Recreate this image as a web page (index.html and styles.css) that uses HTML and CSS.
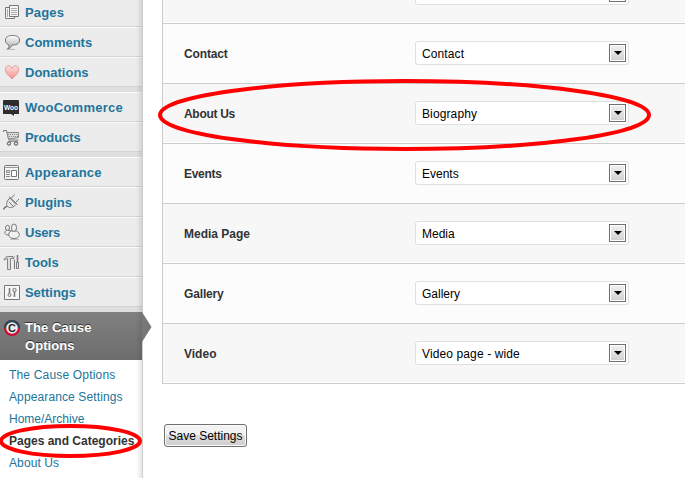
FILE: index.html
```html
<!DOCTYPE html>
<html lang="en">
<head>
<meta charset="utf-8">
<title>The Cause Options</title>
<link rel="stylesheet" href="styles.css">
</head>
<body>
<div class="page">
  <nav class="sidebar">
    <ul class="group">
      <li class="item"><svg class="icon" viewBox="0 0 18 18"><g fill="#f6f6f6" stroke="#777"><path d="M2.500 4.500h9v11h-9z"/><path d="M6.500 2.500h9v11h-9z"/></g><path d="M8 5.500h6M8 7.500h6M8 9.500h6M8 11.500h6M4.500 6v8" stroke="#aaa"/></svg><span class="w-pages">Pages</span></li>
      <li class="item"><svg class="icon" viewBox="0 0 18 18"><defs><linearGradient id="bubble" x2="0" y2="1"><stop stop-color="#fff"/><stop offset="1" stop-color="#aaa"/></linearGradient></defs><path d="M9.500 2.500C5 2.500 2.500 4 2.500 7S4 11.500 6 12c0 2-.5 3-1.500 4 2.500-.5 4-2 4.500-4 6 0 7.500-2 7.500-5s-2.500-4.500-7-4.500z" fill="url(#bubble)" stroke="#777"/><path d="M3 16.500h9" stroke="#bbb"/></svg><span>Comments</span></li>
      <li class="item"><svg class="icon" viewBox="0 0 18 18"><defs><linearGradient id="heart" x2="0" y2="1"><stop stop-color="#ffe2df"/><stop offset="1" stop-color="#f58c8c"/></linearGradient></defs><path d="M9 16C6 13 2.500 10.500 2.500 6.500c0-4.500 5-5 6.500-1 1.500-4 6.500-3.500 6.500 1C15.500 10.500 12 13 9 16z" fill="url(#heart)" stroke="#dd9a9a"/></svg><span>Donations</span></li>
    </ul>
    <ul class="group">
      <li class="item"><svg class="icon" viewBox="0 0 18 18"><path d="M1 2h14a1 1 0 0 1 1 1v13h-5v2l-3-2H0V3a1 1 0 0 1 1-1z" fill="#2d2d2d"/><text class="woo" x="1" y="12" textLength="14" lengthAdjust="spacingAndGlyphs">Woo</text></svg><span class="w-woo">WooCommerce</span></li>
      <li class="item"><svg class="icon" viewBox="0 0 18 18"><path d="M.5 4V2.500h3l2.500 9.500h9.500" fill="none" stroke="#777"/><path d="M4 4.500h11.500v5l-10 1.500z" fill="#ddd" stroke="#888"/><path d="M5 6.500h10M6 8.500h9" stroke="#888" stroke-dasharray="1 1"/><path d="M5 13.500h10" stroke="#999"/><circle cx="6" cy="15.500" r="1.700" fill="#ddd" stroke="#555"/><circle cx="13" cy="15.500" r="1.700" fill="#ddd" stroke="#555"/></svg><span class="w-products">Products</span></li>
    </ul>
    <ul class="group">
      <li class="item"><svg class="icon" viewBox="0 0 18 18"><rect x="1.500" y="2.500" width="14" height="14" rx="1" fill="#f5f5f5" stroke="#777"/><path d="M2 4.500h13" stroke="#999"/><path d="M3.500 7.500h3v2h-3zM3 11.500h4M3 13.500h4" fill="none" stroke="#888"/><path d="M8.500 7.500h5v6h-5z" fill="#fff" stroke="#777"/></svg><span class="w-appearance">Appearance</span></li>
      <li class="item"><svg class="icon" viewBox="0 0 18 18"><path d="M.5 16.500C1.500 14 2.500 13.500 4 13.500" fill="none" stroke="#777" stroke-width="1.500"/><path d="M7 5l6 6.500c-2.500 3-6 4-8.500 2C2.500 11 4 7.500 7 5z" fill="#e8e8e8" stroke="#777"/><path d="M6 3.500l8.500 8M8.500 5l3-3.500M12.500 9.500L16 6M6 9l4 4" fill="none" stroke="#777"/></svg><span>Plugins</span></li>
      <li class="item"><svg class="icon" viewBox="0 0 18 18"><path d="M7 16.500h9" stroke="#bbb"/><g fill="#f1f1f1" stroke="#777"><ellipse cx="4.500" cy="5" rx="2" ry="2.700"/><path d="M4 7c-3 1-3 5 1.500 5H8V8z"/><path d="M8.500 8C4 9.500 5 15.500 11 15.500s7-5.500 2.500-7.500z"/><ellipse cx="11" cy="4.700" rx="2.500" ry="3.700"/></g></svg><span class="w-users">Users</span></li>
      <li class="item"><svg class="icon" viewBox="0 0 18 18"><path d="M1 7C1.500 4.500 3.500 3.500 5 3.500h5v2H7.500v11h-3V5.500L1 7z" fill="#ddd" stroke="#858585"/><path d="M14.500 2v7" stroke="#777" stroke-width="1.500"/><path d="M13.500 9.500h2v6h-2zM11.500 3.500c-1.500 1-1 3 0 3.500v9" fill="none" stroke="#777"/></svg><span>Tools</span></li>
      <li class="item"><svg class="icon" viewBox="0 0 18 18"><path d="M1.500 2.500h15v14h-15z" fill="#f7f7f7" stroke="#777"/><path d="M6.500 5v6M11.500 8v6" stroke="#777" stroke-width="1.500"/><circle cx="6.500" cy="12" r="1.500" fill="#eee" stroke="#777"/><circle cx="11.500" cy="7" r="1.700" fill="#eee" stroke="#777"/></svg><span class="w-settings">Settings</span></li>
    </ul>
    <div class="current">
      <svg class="icon" viewBox="0 0 18 18"><circle cx="9" cy="9" r="8" fill="#c90f35"/><path d="M1 9a8 8 0 0 1 16 0z" fill="#25485c"/><circle cx="9" cy="9" r="5.800" fill="#eee"/><text class="badge" x="9" y="13" text-anchor="middle">C</text></svg>
      <span class="w-cause">The Cause<br>Options</span>
      <svg class="pointer" viewBox="0 0 10 30"><path d="M0 0l9.500 15L0 30z"/></svg>
    </div>
    <ul class="submenu">
      <li class="s-cause">The Cause Options</li>
      <li class="s-appearance">Appearance Settings</li>
      <li>Home/Archive</li>
      <li class="selected">Pages and Categories</li>
      <li class="s-about">About Us</li>
    </ul>
  </nav>
  <main class="content">
    <div class="options">
      <div class="row"><b></b><div class="select"><span></span><i class="drop"></i></div></div>
      <div class="row"><b class="narrow">Contact</b><div class="select"><span class="wide">Contact</span><i class="drop"></i></div></div>
      <div class="row"><b class="narrower">About Us</b><div class="select"><span class="wide">Biography</span><i class="drop"></i></div></div>
      <div class="row"><b class="narrower">Events</b><div class="select"><span>Events</span><i class="drop"></i></div></div>
      <div class="row"><b>Media Page</b><div class="select"><span>Media</span><i class="drop"></i></div></div>
      <div class="row"><b class="narrow">Gallery</b><div class="select"><span>Gallery</span><i class="drop"></i></div></div>
      <div class="row"><b>Video</b><div class="select"><span class="wide">Video page - wide</span><i class="drop"></i></div></div>
    </div>
    <button class="save">Save Settings</button>
  </main>
  <svg class="marks" viewBox="0 0 685 478"><ellipse cx="404.500" cy="115" rx="244.500" ry="34"/><ellipse cx="70.500" cy="441" rx="69.500" ry="15"/></svg>
</div>
</body>
</html>
```
FILE: styles.css
```css
* { box-sizing: border-box; }
body { margin: 0; background: #fff; font: 12px "Liberation Sans", Arial, sans-serif; }
ul { list-style: none; margin: 0; padding: 0; }
.page { position: relative; display: flex; width: 685px; height: 478px; overflow: hidden; }
.sidebar { position: relative; width: 143px; height: 481px; margin-top: -3px; flex: none; background: #dfdfdf; border-right: 1px solid #ccc; }
.sidebar::after { content: ""; position: absolute; top: 0; bottom: 0; right: 0; width: 6px; background: linear-gradient(to right, transparent, rgba(0,0,0,.1)); }
.group { margin-bottom: 5px; }
.item { display: flex; align-items: center; height: 30px; padding-left: 3px; background: #ececec; border-top: 1px solid #fafafa; border-bottom: 1px solid #d4d4d4; color: #21759b; font-size: 13px; font-weight: bold; white-space: nowrap; }
.icon { width: 18px; height: 18px; margin-right: 4px; flex: none; fill: none; }
.woo { fill: #fff; font-size: 7px; font-weight: bold; }
.badge { fill: #222; font-size: 11px; text-shadow: none; }
.w-pages { letter-spacing: .15px; }
.w-woo { letter-spacing: .27px; }
.w-products { letter-spacing: -.1px; }
.w-appearance { letter-spacing: .23px; }
.w-users { letter-spacing: -.2px; }
.w-settings { letter-spacing: -.05px; }
.w-cause { letter-spacing: .08px; }
.current { position: relative; display: flex; height: 48px; padding: 7px 0 0 3px; background: linear-gradient(#808080, #6d6d6d); color: #fff; font-size: 13px; font-weight: bold; line-height: 18px; text-shadow: 0 -1px 0 #333; }
.pointer { position: absolute; left: 142px; top: 0; width: 10px; height: 30px; fill: #777; z-index: 2; }
.submenu { height: 121px; padding: 4px 0 0 9px; background: #fff; color: #21759b; line-height: 22px; white-space: nowrap; }
.s-cause { letter-spacing: .18px; }
.s-appearance { letter-spacing: .12px; }
.s-about { letter-spacing: .1px; }
.selected { color: #333; font-weight: bold; }
.content { flex: 1; margin: -36px 0 0 19px; min-width: 0; }
.options { border-left: 1px solid #ccc; }
.row { display: flex; align-items: center; height: 60px; padding-left: 21px; background: #f7f7f7; border-bottom: 1px solid #ccc; box-shadow: inset 0 -1px #fff; }
.row:nth-child(even) { background: #fcfcfc; }
.row b { width: 231px; flex: none; color: #333; }
.row .narrow { letter-spacing: -.15px; }
.row .narrower { letter-spacing: -.3px; }
.wide { letter-spacing: .12px; }
.select { display: flex; align-items: center; justify-content: space-between; width: 214px; height: 24px; margin-bottom: 2px; padding: 0 2px 0 6px; background: #fff; border: 1px solid #dfdfdf; border-radius: 3px; color: #000; }
.select span { padding-top: 2px; }
.drop { display: flex; align-items: center; justify-content: center; width: 17px; height: 18px; border: 1px solid #707070; background: linear-gradient(#f2f2f2, #cfcfcf); box-shadow: inset 0 0 0 1px #fff; }
.drop::after { content: ""; border: 4px solid transparent; border-top-color: #000; border-bottom: 0; }
.save { display: block; width: 83px; height: 23px; margin: 40px 0 0 2px; padding: 0; border: 1px solid #707070; border-radius: 3px; background: linear-gradient(#f2f2f2 0 45%, #ddd 50%, #cfcfcf); box-shadow: inset 0 0 0 1px #fafafa; color: #000; font: inherit; }
.marks { position: absolute; inset: 0; width: 685px; height: 478px; fill: none; stroke: #f00; stroke-width: 4px; z-index: 3; pointer-events: none; }
```
